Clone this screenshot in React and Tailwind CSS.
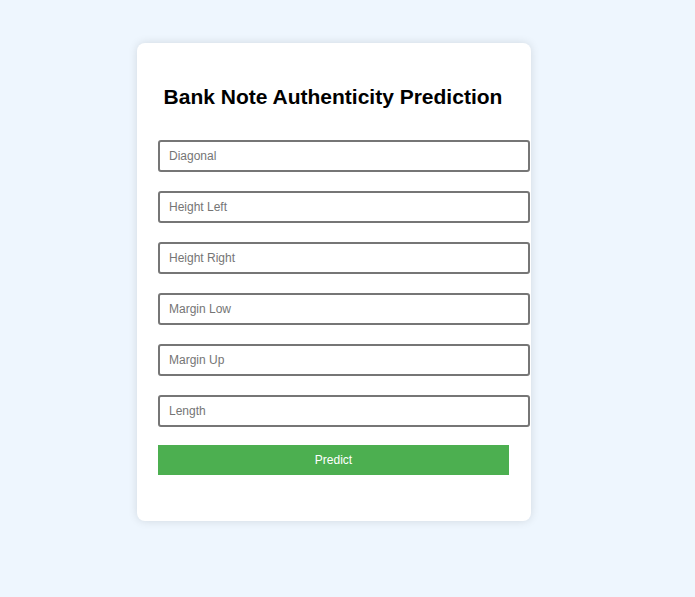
const fields = ["Diagonal", "Height Left", "Height Right", "Margin Low", "Margin Up", "Length"];

function App() {
  return (
    <div className="min-h-[597px] bg-[#eef6fe] pt-[43px] pl-[137px] font-['Liberation_Sans',Arial,sans-serif]">
      <div className="w-[394px] rounded-[8px] bg-white pl-[21px] pr-[23px] pt-[42px] pb-[46px] shadow-[0_0_10px_rgba(0,0,0,0.12)]">
        <h2 className="text-center text-[21px] leading-[24px] font-bold text-black">
          Bank Note Authenticity Prediction
        </h2>
        <form className="mt-[31px] flex w-[350px] flex-col gap-[19px]" onSubmit={(e) => e.preventDefault()}>
          {fields.map((f) => (
            <input
              key={f}
              type="text"
              placeholder={f}
              className="h-[32px] w-[372px] rounded-[3px] border-2 border-[#767676] bg-white px-[9px] text-[12px] text-black placeholder:text-[#757575] outline-none"
            />
          ))}
        </form>
        <button
          type="submit"
          className="mt-[18px] h-[30px] w-[351px] bg-[#4caf50] text-[12px] text-white"
        >
          Predict
        </button>
      </div>
    </div>
  );
}

export default App;
